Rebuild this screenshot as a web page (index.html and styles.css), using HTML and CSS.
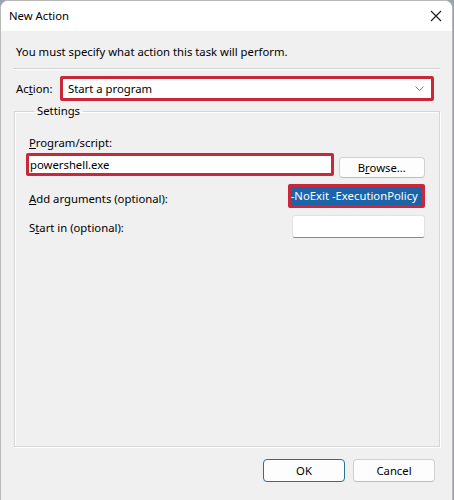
FILE: index.html
```html
<!DOCTYPE html>
<html lang="en">
<head>
  <meta charset="utf-8" />
  <title>New Action</title>
  <meta name="viewport" content="width=device-width, initial-scale=1" />
  <link rel="stylesheet" href="styles.css">
</head>
<body>
  <div class="window">
    <div class="titlebar">
      <span class="title">New Action</span>
      <svg class="close" width="12" height="12" viewBox="0 0 12 12">
        <path d="M1 1 L11 11 M11 1 L1 11" stroke="#1a1a1a" stroke-width="1.1" fill="none" />
      </svg>
    </div>

    <div class="content">
      <div class="desc">You must specify what action this task will perform.</div>
      <div class="sep"></div>

      <div class="action-row">
        <span class="label">Ac<u>t</u>ion:</span>
        <div class="mark combo">
          <span>Start a program</span>
          <svg width="9" height="5" viewBox="0 0 9 5">
            <path d="M0.5 0.5 L4.5 4.5 L8.5 0.5" stroke="#6a6a6a" stroke-width="0.9" fill="none" />
          </svg>
        </div>
      </div>

      <fieldset class="settings">
        <legend>Settings</legend>

        <div class="label field-label"><u>P</u>rogram/script:</div>
        <div class="row program">
          <div class="mark textbox">powershell.exe</div>
          <button class="btn browse" type="button">B<u>r</u>owse...</button>
        </div>

        <div class="row args">
          <span class="label"><u>A</u>dd arguments (optional):</span>
          <div class="mark argbox"><span class="sel">-NoExit -ExecutionPolicy</span></div>
        </div>

        <div class="row start">
          <span class="label">S<u>t</u>art in (optional):</span>
          <div class="input"></div>
        </div>
      </fieldset>

      <div class="footer">
        <button class="btn default" type="button">OK</button>
        <button class="btn" type="button">Cancel</button>
      </div>
    </div>
  </div>
</body>
</html>
```

FILE: styles.css
```css
:root {
  --mark:#c8283a;
  --face:#f0f0f0;
}
html, body {
  margin:0;
  height:100%;
}
body {
  background:#9aa3ab;
  font-family:'Noto Sans','Liberation Sans',sans-serif;
  font-size:11.3px;
  color:#000;
}
.window {
  height:100%;
  box-sizing:border-box;
  display:flex;
  flex-direction:column;
  background:var(--face);
  border-left:1px solid #b8b8b8;
  border-top:1px solid #b8b8b8;
  border-right:1px solid #b8b8b8;
  border-radius:8px 8px 0 0;
  overflow:hidden;
  margin-right:1px;
}
.titlebar {
  height:30px;
  background:#fff;
  display:flex;
  align-items:center;
  justify-content:space-between;
  padding:0 10px 0 8px;
  flex-shrink:0;
}
.title {
  line-height:16px;
}
.close {
  margin-top:-1px;
}
.content {
  flex:1;
  display:flex;
  flex-direction:column;
  padding:0 12px 0 12px;
}
.desc {
  margin-top:13px;
  line-height:16px;
  padding-left:3px;
}
.sep {
  margin-top:8px;
  border-top:1px solid #d2d2d2;
  border-bottom:1px solid #fff;
}
.label {
  line-height:16px;
}
.action-row {
  margin-top:6px;
  display:flex;
  align-items:center;
  padding-left:3px;
}
.action-row .label {
  width:44px;
}
.mark {
  border:3px solid var(--mark);
  border-radius:2px;
  background:#fff;
  box-sizing:border-box;
}
.combo {
  width:374px;
  height:25px;
  display:flex;
  align-items:center;
  justify-content:space-between;
  padding:0 7px 0 5px;
}
.settings {
  flex:1;
  margin:2px 0 0 1px;
  padding:0 14px 0 14px;
  border:1px solid #d6d6d6;
  box-shadow:inset 1px 1px 0 #fff, 1px 1px 0 #fff;
  min-width:0;
}
.settings legend {
  padding:0 3px;
  margin-left:5px;
  line-height:16px;
}
.field-label {
  margin-top:16px;
}
.row {
  display:flex;
}
.program {
  margin-top:2px;
  align-items:flex-start;
}
.textbox {
  margin-left:-3px;
  width:310px;
  height:23px;
  line-height:17px;
  padding-left:1px;
}
.btn {
  font-family:inherit;
  font-size:11.3px;
  color:#000;
  background:#fdfdfd;
  border:1px solid #d0d0d0;
  border-bottom-color:#bcbcbc;
  border-radius:4px;
  padding:0;
  height:23px;
}
.browse {
  margin:4px 0 0 5px;
  width:87px;
  height:21px;
}
.args {
  margin-top:6px;
  align-items:flex-start;
}
.args .label {
  width:264px;
  margin-top:7px;
}
.argbox {
  width:140px;
  height:24px;
  padding:0;
  overflow:hidden;
  white-space:nowrap;
  display:flex;
  align-items:stretch;
}
.sel {
  flex:1;
  background:#1b64aa;
  color:#fff;
  line-height:18px;
  overflow:hidden;
}
.start {
  margin-top:7px;
  align-items:flex-start;
}
.start .label {
  width:265px;
  margin-top:5px;
}
.input {
  width:134px;
  height:23px;
  box-sizing:border-box;
  background:#fff;
  border:1px solid #e2e2e2;
  border-bottom-color:#8a8a8a;
  border-radius:3px;
}
.footer {
  display:flex;
  justify-content:flex-end;
  gap:8px;
  padding:12px 5px 18px 0;
}
.footer .btn {
  width:82px;
}
.footer .default {
  border-color:#2a6f8e;
}
```
